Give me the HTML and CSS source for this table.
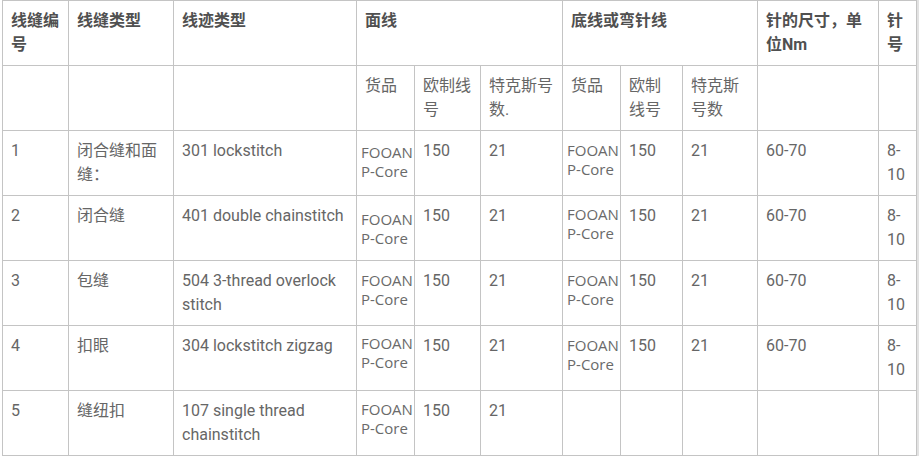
FILE: index.html
```html
<!DOCTYPE html>
<html lang="zh-CN">
<head>
<meta charset="utf-8">
<title>线缝</title>
<link rel="stylesheet" href="styles.css">
</head>
<body>
<div class="wrap">
<table class="spec">
  <colgroup>
    <col class="c1"><col class="c2"><col class="c3"><col class="c4"><col class="c5"><col class="c6"><col class="c7"><col class="c8"><col class="c9"><col class="c10"><col class="c11">
  </colgroup>
  <thead>
    <tr class="h1">
      <th>线缝编号</th>
      <th>线缝类型</th>
      <th>线迹类型</th>
      <th colspan="3">面线</th>
      <th colspan="3">底线或弯针线</th>
      <th>针的尺寸，单位Nm</th>
      <th>针号</th>
    </tr>
    <tr class="h2">
      <td></td><td></td><td></td>
      <td>货品</td><td>欧制线号</td><td>特克斯号数.</td>
      <td>货品</td><td>欧制线号</td><td>特克斯号数</td>
      <td></td><td></td>
    </tr>
  </thead>
  <tbody>
    <tr>
      <td>1</td><td>闭合缝和面缝：</td><td>301 lockstitch</td>
      <td class="fo fo-12">FOOAN P-Core</td><td>150</td><td>21</td>
      <td class="fo fo-10">FOOAN P-Core</td><td>150</td><td>21</td>
      <td>60-70</td><td>8-<wbr>10</td>
    </tr>
    <tr>
      <td>2</td><td>闭合缝</td><td>401 double chainstitch</td>
      <td class="fo fo-14">FOOAN P-Core</td><td>150</td><td>21</td>
      <td class="fo fo-9">FOOAN P-Core</td><td>150</td><td>21</td>
      <td>60-70</td><td>8-<wbr>10</td>
    </tr>
    <tr>
      <td>3</td><td>包缝</td><td>504 3-thread overlock stitch</td>
      <td class="fo fo-10">FOOAN P-Core</td><td>150</td><td>21</td>
      <td class="fo fo-10">FOOAN P-Core</td><td>150</td><td>21</td>
      <td>60-70</td><td>8-<wbr>10</td>
    </tr>
    <tr>
      <td>4</td><td>扣眼</td><td>304 lockstitch zigzag</td>
      <td class="fo fo-8">FOOAN P-Core</td><td>150</td><td>21</td>
      <td class="fo fo-10">FOOAN P-Core</td><td>150</td><td>21</td>
      <td>60-70</td><td>8-<wbr>10</td>
    </tr>
    <tr>
      <td>5</td><td>缝纽扣</td><td>107 single thread chainstitch</td>
      <td class="fo fo-9">FOOAN P-Core</td><td>150</td><td>21</td>
      <td></td><td></td><td></td>
      <td></td><td></td>
    </tr>
  </tbody>
</table>
</div>
</body>
</html>
```
FILE: styles.css
```css
html, body {
  margin: 0;
  padding: 0;
  background: #ffffff;
}
.wrap {
  padding: 0 0 0 2px;
  border-right: 2px solid #e2e2e2;
}
.spec {
  border-collapse: collapse;
  table-layout: fixed;
  width: 915px;
  font-family: Roboto, "Noto Sans CJK SC", sans-serif;
  font-size: 16px;
  line-height: 24px;
  color: #666666;
}
.c1 { width: 66px; }
.c2 { width: 105px; }
.c3 { width: 183px; }
.c4 { width: 58px; }
.c5 { width: 66px; }
.c6 { width: 82px; }
.c7 { width: 58px; }
.c8 { width: 62px; }
.c9 { width: 75px; }
.c10 { width: 121px; }
.c11 { width: 38px; }
.spec th,
.spec td {
  border: 1px solid #c4c4c4;
  padding: 8px 8px;
  vertical-align: top;
  text-align: left;
  word-wrap: break-word;
  height: 48px;
}
.spec th {
  font-weight: bold;
  color: #505050;
}
.spec td.fo {
  font-family: "Open Sans", "Noto Sans", sans-serif;
  font-size: 15px;
  line-height: 19px;
  padding: 10px 1px 0 4px;
  color: #6a6a6a;
}
.spec td.fo-8 { padding-top: 8px; }
.spec td.fo-9 { padding-top: 9px; }
.spec td.fo-10 { padding-top: 10px; }
.spec td.fo-12 { padding-top: 12px; }
.spec td.fo-14 { padding-top: 14px; }
```
